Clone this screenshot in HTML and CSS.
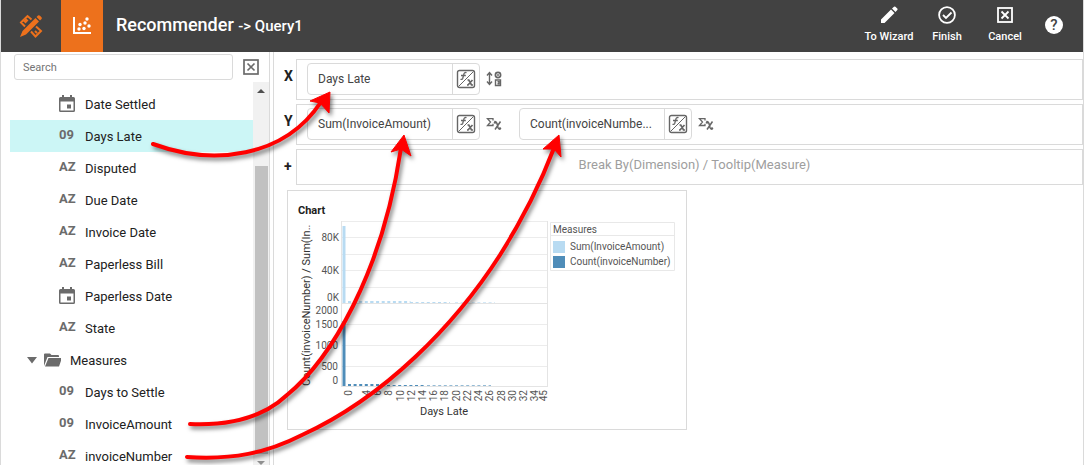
FILE: index.html
```html
<!DOCTYPE html>
<html lang="en">
<head>
<meta charset="utf-8">
<title>Recommender - Query1</title>
<link rel="stylesheet" href="styles.css">
</head>
<body>
<svg class="defs" aria-hidden="true">
  <symbol id="calendar" viewBox="0 0 16 18"><path fill="currentColor" fill-rule="evenodd" d="M3 0h2v2h6V0h2v2h1.500q1.500 0 1.500 1.500v12q0 1.500-1.500 1.500h-13Q0 17 0 15.500v-12Q0 2 1.500 2H3zM1.500 6.500v9h13v-9zM8 9.500h4v4H8z"/></symbol>
  <symbol id="fx" viewBox="0 0 20 20"><g fill="none" stroke="currentColor"><rect x="1.500" y="1.500" width="17" height="17" rx="2" stroke-width="1.400"/><path d="M2.500 17.500 17.500 2.500"/><path d="M10.500 3.700q-2.200-.8-2.700 1.600L6.700 9.500q-.4 1.300-2.200.8M5 6.500h4.800" stroke-width="1.300"/><path d="M11.500 11h1.300l2.700 5H17M16.500 11l-4.500 5h-1" stroke-width="1.700"/></g></symbol>
  <symbol id="sigma" viewBox="0 0 16 16"><g fill="none" stroke="currentColor"><path d="M7 4.500V2.700H1.500l3 3.300-3 3.500H7V7.700" stroke-width="1.300"/><path d="M8.500 5.500q1.800-.5 2.500 2l1 4q.5 1.800 2 1.500M14.500 5.500 9 13.500" stroke-width="1.500"/></g><circle cx="9" cy="6.500" r="1.200" fill="currentColor"/><circle cx="14" cy="12.500" r="1.200" fill="currentColor"/></symbol>
</svg>
<div class="app">
  <header class="topbar">
    <button class="tool" aria-label="Design"><svg width="24" height="24" viewBox="0 0 24 24"><g fill="none" stroke="currentColor" stroke-width="2"><path d="M12.500 5.500 8.500 2 6 4.500l2 2L6.500 8l-2-2L2 8.500l4 4"/><path d="M17 12.500l5 4.500-5.500 5.500-4.500-5M18 19l-2-2"/></g><path fill="currentColor" d="M19 1.500q1-.8 2 .2l1.500 1.500q.8.900 0 1.800L21 6.500 17.500 3zM16.500 4 20 7.500 7 20.500 1 23l2.500-6z"/></svg></button>
    <button class="tool active" aria-label="Chart"><svg width="20" height="20" viewBox="0 0 20 20"><path d="M2 1v16h17" fill="none" stroke="currentColor" stroke-width="2"/><g fill="currentColor"><circle cx="7" cy="13" r="1.700"/><circle cx="8" cy="8.500" r="1.700"/><circle cx="12" cy="12.500" r="1.700"/><circle cx="13" cy="7" r="1.700"/><circle cx="15" cy="3" r="1.700"/><circle cx="17" cy="10" r="1.700"/></g></svg></button>
    <h1>Recommender <small>-&gt; Query1</small></h1>
    <nav class="actions">
      <button><svg width="18" height="18" viewBox="0 0 18 18"><path fill="currentColor" d="M1 13.500 11 3.500l3.500 3.500-10 10H1zM12 2.500 14 .7q.7-.6 1.400 0l1.900 1.900q.7.7 0 1.400L15.500 6z"/></svg>To Wizard</button>
      <button><svg width="18" height="18" viewBox="0 0 18 18"><g fill="none" stroke="currentColor" stroke-width="1.800"><circle cx="9" cy="9" r="7.900"/><path d="m5 9 3 3 5.500-5.500"/></g></svg>Finish</button>
      <button><svg width="18" height="18" viewBox="0 0 18 18"><g fill="none" stroke="currentColor" stroke-width="1.800"><rect x="2" y="2" width="14" height="14"/><path d="m5.500 5.500 7 7m0-7-7 7"/></g></svg>Cancel</button>
      <button class="help" aria-label="Help">?</button>
    </nav>
  </header>
  <div class="workspace">
    <aside class="sidebar">
      <div class="search"><input type="text" placeholder="Search" aria-label="Search"><button aria-label="Clear search"><svg width="16" height="16" viewBox="0 0 16 16"><g fill="none" stroke="currentColor" stroke-width="1.700"><rect x="1" y="1" width="14" height="14"/><path d="m4.500 4.500 7 7m0-7-7 7"/></g></svg></button></div>
      <div class="browser">
        <ul class="tree">
          <li><svg class="type"><use href="#calendar"/></svg>Date Settled</li>
          <li class="selected"><b class="type">09</b>Days Late</li>
          <li><b class="type">AZ</b>Disputed</li>
          <li><b class="type">AZ</b>Due Date</li>
          <li><b class="type">AZ</b>Invoice Date</li>
          <li><b class="type">AZ</b>Paperless Bill</li>
          <li><svg class="type"><use href="#calendar"/></svg>Paperless Date</li>
          <li><b class="type">AZ</b>State</li>
          <li class="folder"><svg width="34" height="14" viewBox="0 0 34 14"><path fill="currentColor" d="M0 4h10L5 10.500zM17 13V1.500Q17 .5 18 .5h5l1.500 1.500H31q1 0 1 1v1H20.500zM21.500 5H35l-3 8.500H18z"/></svg>Measures</li>
          <li><b class="type">09</b>Days to Settle</li>
          <li><b class="type">09</b>InvoiceAmount</li>
          <li><b class="type">AZ</b>invoiceNumber</li>
        </ul>
        <div class="scrollbar"><i class="up"></i><i class="thumb"></i><i class="down"></i></div>
      </div>
    </aside>
    <main class="editor">
      <section class="shelf"><h2>X</h2><div class="slot">
        <div class="field"><button class="name">Days Late</button><button class="fx" aria-label="Edit formula"><svg width="20" height="20"><use href="#fx"/></svg></button></div>
        <button class="extra" aria-label="Sort"><svg width="16" height="16" viewBox="0 0 16 16"><g fill="none" stroke="currentColor" stroke-width="1.400"><path d="M3.500 2v11M1 4.500l2.500-3 2.500 3M1 10.500l2.500 3 2.500-3"/><circle cx="12" cy="4" r="2.600" stroke-width="1.700"/><path d="M12 3v2M9.500 9h5v5.500h-5zM11.500 10.700H13v2h-1.500"/></g></svg></button>
      </div></section>
      <section class="shelf"><h2>Y</h2><div class="slot">
        <div class="field"><button class="name">Sum(InvoiceAmount)</button><button class="fx" aria-label="Edit formula"><svg width="20" height="20"><use href="#fx"/></svg></button></div>
        <button class="extra" aria-label="Aggregate"><svg width="16" height="16"><use href="#sigma"/></svg></button>
        <div class="field"><button class="name">Count(invoiceNumbe...</button><button class="fx" aria-label="Edit formula"><svg width="20" height="20"><use href="#fx"/></svg></button></div>
        <button class="extra" aria-label="Aggregate"><svg width="16" height="16"><use href="#sigma"/></svg></button>
      </div></section>
      <section class="shelf"><h2>+</h2><div class="slot hint">Break By(Dimension) / Tooltip(Measure)</div></section>
      <section class="card">
        <h3>Chart</h3>
        <svg class="plot" width="398" height="212" viewBox="288 217 398 212">
          <g class="grid"><path d="M341 221.500h207M341 237.500h207M341 254.500h207M341 270.500h207M341 287.500h207M341 324.500h207M341 345.500h207M341 366.500h207"/><path class="axis" d="M341.500 221v166M547.500 221v166M341 303.500h207M341 386.500h207"/></g>
          <path class="light" d="M344 226v77"/>
          <path class="light small" d="M348 302h24"/><path class="light small" d="M370.500 302h40"/><path class="light tiny" d="M410 302.500h40"/><path class="light faint" d="M455 302.500h40"/>
          <path class="dark" d="M344 321v65"/>
          <path class="dark small" d="M348 385h37"/><path class="dark tiny" d="M387 385.500h38"/><path class="dark faint" d="M427 385.500h64"/>
          <g class="ylabel"><text x="339" y="241">80K</text><text x="339" y="274">40K</text><text x="339" y="301">0K</text><text x="338" y="314">2000</text><text x="338" y="328">1500</text><text x="338" y="349">1000</text><text x="338" y="370">500</text><text x="338" y="384">0</text></g>
          <g class="xlabel"><text transform="translate(352 390) rotate(-90)">0</text><text transform="translate(370 390) rotate(-90)">4</text><text transform="translate(381 390) rotate(-90)">6</text><text transform="translate(392 390) rotate(-90)">8</text><text transform="translate(404 390) rotate(-90)">10</text><text transform="translate(415 390) rotate(-90)">12</text><text transform="translate(426 390) rotate(-90)">14</text><text transform="translate(437 390) rotate(-90)">16</text><text transform="translate(448 390) rotate(-90)">18</text><text transform="translate(460 390) rotate(-90)">20</text><text transform="translate(471 390) rotate(-90)">22</text><text transform="translate(482 390) rotate(-90)">24</text><text transform="translate(493 390) rotate(-90)">26</text><text transform="translate(505 390) rotate(-90)">28</text><text transform="translate(516 390) rotate(-90)">30</text><text transform="translate(527 390) rotate(-90)">32</text><text transform="translate(538 390) rotate(-90)">34</text><text transform="translate(547 390) rotate(-90)">45</text></g>
          <text class="title" x="420" y="415">Days Late</text>
          <text class="title" transform="translate(310 386) rotate(-90)">Count(invoiceNumber) / Sum(In..</text>
          <path class="legendbox" d="M550.500 222.500h124v48h-124zM550.500 235.500h124"/>
          <g class="legend"><text x="553" y="233">Measures</text><text x="570" y="250">Sum(InvoiceAmount)</text><text x="570" y="265">Count(invoiceNumber)</text></g>
          <rect x="553" y="241" width="12" height="12" fill="#b8dbf2"/><rect x="553" y="256" width="12" height="12" fill="#4f8db9"/>
        </svg>
      </section>
    </main>
  </div>
  <svg class="callouts" width="1084" height="465" viewBox="0 0 1084 465" aria-hidden="true">
    <g class="stroke"><path d="M153 144C213 166 284 158 321 102"/><path d="M190 424C236 426 266 415 287 395C330 360 382 275 401 148"/><path d="M187 457C232 460 267 453 302 435C385 397 455 325 500 255C522 220 540 185 554 148"/></g>
    <g class="head"><path d="m330 92-20 9 10 2 9 10z"/><path d="m404 135-13 17 10-3 10 7z"/><path d="m559 135-16 14 11 0 7 8z"/></g>
  </svg>
</div>
</body>
</html>
```
FILE: styles.css
```css
* { box-sizing: border-box; }
body { margin: 0; font-family: Roboto, "Liberation Sans", sans-serif; font-size: 13px; color: #212121; background: #fff; }
button { border: 0; padding: 0; background: none; color: inherit; font: inherit; }
svg { display: block; }
h1, h2, h3, ul { margin: 0; padding: 0; }
.defs { position: absolute; width: 0; height: 0; }
.app { position: relative; display: flex; flex-direction: column; height: 100vh; overflow: hidden; border: solid #dadada; border-width: 0 1px; }

.topbar { display: flex; flex: none; height: 52px; background: #424242; color: #fff; }
.tool { display: grid; place-items: center; width: 60px; color: #ed711c; }
.tool.active { width: 42px; background: #ed711c; color: #fff; }
h1 { flex: 1; padding-left: 13px; font-size: 18px; line-height: 50px; font-weight: 500; }
h1 small { font-size: 15px; }
.actions { display: flex; padding-right: 20px; }
.actions button { display: flex; flex-direction: column; align-items: center; gap: 6px; width: 58px; padding-top: 6px; font-size: 11px; line-height: 13px; font-weight: 500; }
.actions .help { display: block; width: 18px; height: 18px; margin: 16px 0 0 11px; padding: 0; border-radius: 50%; background: #fff; color: #424242; font-size: 15px; line-height: 18px; }

.workspace { display: flex; flex: 1; min-height: 0; }
.sidebar { display: flex; flex-direction: column; width: 269px; border-right: 1px solid #dadada; }
.search { display: flex; flex: none; align-items: center; height: 30px; padding: 0 10px 0 13px; gap: 10px; color: #6b6b6b; }
.search input { flex: 1; min-width: 0; height: 26px; padding: 0 8px; border: 1px solid #dadada; border-radius: 3px; font: 12px Roboto, sans-serif; color: #333; }
.search input::placeholder { color: #757575; font-size: 11px; }
.browser { display: flex; flex: 1; min-height: 0; padding-left: 9px; }
.tree { flex: 1; padding-top: 6px; list-style: none; overflow: hidden; }
.tree li { display: flex; align-items: center; height: 32px; padding-left: 49px; }
.tree li.selected { background: #ccf6f6; }
.tree li.folder { padding-left: 17px; gap: 9px; }
.tree li.folder svg, .type { color: #6b6b6b; }
.type { width: 16px; height: 18px; margin-right: 10px; font: bold 13px/16px Roboto, sans-serif; }
.scrollbar { display: flex; flex-direction: column; align-items: center; width: 16px; background: #f1f1f1; }
.up, .down { flex: none; border: solid transparent; border-width: 0 4px; }
.up { margin-top: 7px; border-bottom: 4px solid #505050; }
.down { margin: 7px 0 0; border-top: 4px solid #909090; }
.thumb { flex: 1; width: 13px; margin-top: 73px; background: #c1c1c1; }

.editor { display: flex; flex-direction: column; flex: 1; align-items: stretch; gap: 4px; min-width: 0; margin-left: 3px; padding-top: 7px; border-left: 1px solid #dadada; }
.shelf { display: flex; }
.shelf h2 { width: 22px; padding-left: 10px; font-size: 14px; line-height: 35px; font-weight: 700; }
.slot { display: flex; flex: 1; align-items: center; height: 41px; padding: 0 10px 1px; border: 1px solid #dadada; }
.slot.hint { justify-content: center; height: 36px; padding: 0 0 6px 10px; color: #9e9e9e; }
.field { display: flex; width: 173px; height: 32px; border: 1px solid #dadada; border-radius: 4px; color: #444; }
.name { flex: 1; padding-left: 10px; font-size: 12px; text-align: left; white-space: nowrap; }
.fx { display: grid; place-items: center; width: 27px; border-left: 1px solid #dadada; color: #666; }
.extra { margin: 0 17px 0 6px; color: #666; }
.card { width: 400px; margin: 1px 0 0 13px; border: 1px solid #dadada; }
.card h3 { padding: 13px 0 0 10px; font-size: 11px; line-height: 13px; font-weight: 700; }

.plot { font-family: Roboto, sans-serif; fill: #555; }
.grid { fill: none; stroke: #ececec; }
.axis { stroke: #e4e4e4; }
.light, .dark { fill: none; stroke: #b8dbf2; stroke-width: 3; }
.dark { stroke: #4f8db9; }
.small { stroke-dasharray: 3 2.600; stroke-width: 2; }
.tiny { stroke-dasharray: 3 2.600; stroke-width: 1; }
.faint { stroke-dasharray: 3 2.600; stroke-width: 1; opacity: .6; }
.ylabel, .legend { font-size: 10px; }
.ylabel { text-anchor: end; }
.xlabel { font-size: 10px; text-anchor: end; }
.title { font-size: 11px; fill: #333; }
.legendbox { fill: none; stroke: #e8e8e8; }

.callouts { position: absolute; top: 0; left: -1px; pointer-events: none; filter: drop-shadow(2px 3px 2px rgba(0, 0, 0, .5)); }
.stroke { fill: none; stroke: #f00; stroke-width: 4; stroke-linecap: round; }
.head { fill: #f00; stroke: #f00; }
```
